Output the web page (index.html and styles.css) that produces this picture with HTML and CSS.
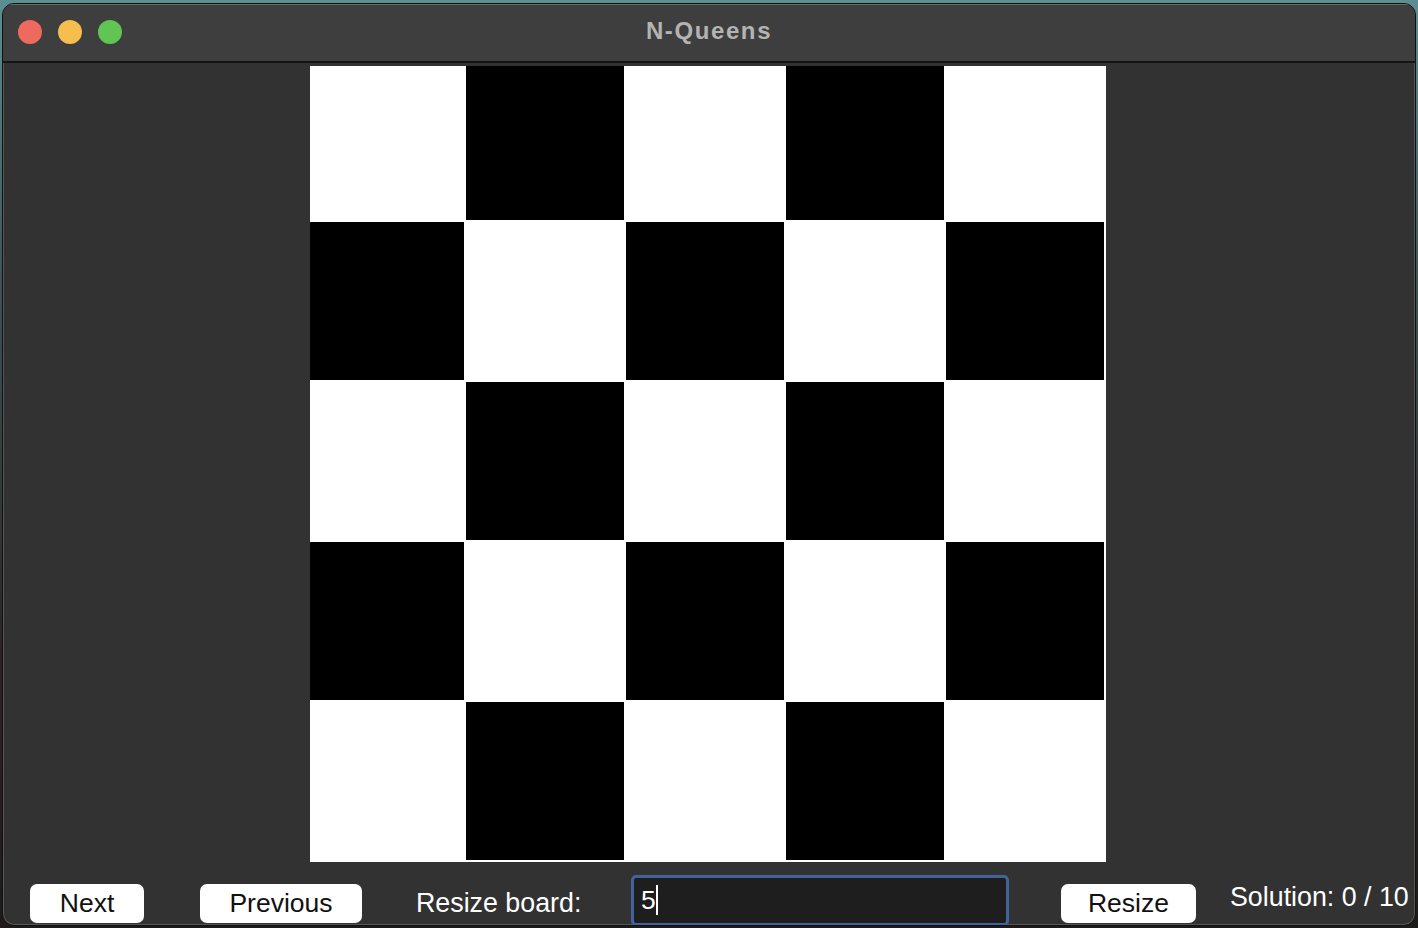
FILE: index.html
```html
<!DOCTYPE html>
<html lang="en">
<head>
<meta charset="utf-8">
<title>N-Queens</title>
<link rel="stylesheet" href="styles.css">
</head>
<body>
<div class="window">
  <div class="titlebar">
    <div class="lights">
      <span class="light red"></span>
      <span class="light yellow"></span>
      <span class="light green"></span>
    </div>
    <div class="title">N-Queens</div>
  </div>
  <div class="content">
    <div class="board">
      <div class="cell w"></div><div class="cell b"></div><div class="cell w"></div><div class="cell b"></div><div class="cell w"></div>
      <div class="cell b"></div><div class="cell w"></div><div class="cell b"></div><div class="cell w"></div><div class="cell b"></div>
      <div class="cell w"></div><div class="cell b"></div><div class="cell w"></div><div class="cell b"></div><div class="cell w"></div>
      <div class="cell b"></div><div class="cell w"></div><div class="cell b"></div><div class="cell w"></div><div class="cell b"></div>
      <div class="cell w"></div><div class="cell b"></div><div class="cell w"></div><div class="cell b"></div><div class="cell w"></div>
    </div>
    <div class="controls">
      <button class="btn btn-next">Next</button>
      <button class="btn btn-prev">Previous</button>
      <span class="label">Resize board:</span>
      <div class="input"><span class="value">5</span></div>
      <button class="btn btn-resize">Resize</button>
      <span class="solution">Solution: 0 / 10</span>
    </div>
  </div>
</div>
</body>
</html>
```

FILE: styles.css
```css
html, body {
  margin: 0;
  padding: 0;
  height: 928px;
  overflow: hidden;
}
body {
  background: linear-gradient(180deg, #5d8f92 0%, #3e5556 30%, #2b2424 70%, #1f1a1a 100%);
  font-family: "Liberation Sans", Arial, sans-serif;
}
.window {
  box-sizing: border-box;
  margin: 3px 2px 2px 2px;
  height: 923px;
  border: 1px solid #111;
  border-radius: 12px;
  overflow: hidden;
  background: #323232;
  box-shadow: inset 0 0 0 1px rgba(255,255,255,0.18);
  display: flex;
  flex-direction: column;
}
.titlebar {
  position: relative;
  flex: none;
  background: #3d3e3d;
  border-top: 1px solid #6a6a6a;
  border-bottom: 2px solid #141414;
  box-sizing: border-box;
  height: 59px;
  display: flex;
  align-items: center;
  justify-content: center;
}
.lights {
  position: absolute;
  left: 15px;
  top: 15px;
  display: flex;
  gap: 16px;
}
.light {
  width: 24px;
  height: 24px;
  border-radius: 50%;
  display: block;
}
.red { background: #ee6a5f; }
.yellow { background: #f5be4f; }
.green { background: #61c554; }
.title {
  color: #b3b3b3;
  font-weight: bold;
  font-size: 24px;
  letter-spacing: 1.6px;
  margin-top: -5px;
}
.content {
  flex: 1;
  display: flex;
  flex-direction: column;
  padding-top: 3px;
}
.board {
  width: 796px;
  height: 796px;
  box-sizing: border-box;
  background: #fff;
  margin: 0 auto;
  transform: translateX(-1px);
  padding: 0 2px 2px 0;
  display: grid;
  grid-template-columns: 154px repeat(4, 158px);
  grid-template-rows: 154px repeat(4, 158px);
  gap: 2px;
}
.cell.b { background: #000; }
.cell.w { background: #fff; }
.controls {
  display: flex;
  align-items: flex-start;
  padding-left: 27px;
  height: 64px;
}
.btn {
  font-family: "Liberation Sans", Arial, sans-serif;
  font-size: 26.5px;
  line-height: 39px;
  height: 39px;
  padding: 0;
  border: none;
  border-radius: 7px;
  background: #fff;
  color: #111;
  margin-top: 22px;
  text-align: center;
}
.btn-next { width: 114px; }
.btn-prev { width: 162px; margin-left: 56px; }
.label {
  color: #fff;
  font-size: 26.8px;
  line-height: 30px;
  margin-top: 26px;
  margin-left: 54px;
  width: 215px;
  white-space: nowrap;
}
.input {
  box-sizing: border-box;
  width: 378px;
  height: 51px;
  margin-top: 13px;
  border: 3px solid #40639a;
  border-radius: 5px;
  background: #1e1e1e;
  padding-left: 7px;
  color: #fff;
  font-size: 26.5px;
  line-height: 45px;
}
.value {
  border-right: 2px solid #fff;
}
.btn-resize { width: 135px; margin-left: 52px; }
.solution {
  color: #fff;
  font-size: 26.8px;
  line-height: 30px;
  margin-top: 20px;
  margin-left: 34px;
  white-space: nowrap;
}
```
